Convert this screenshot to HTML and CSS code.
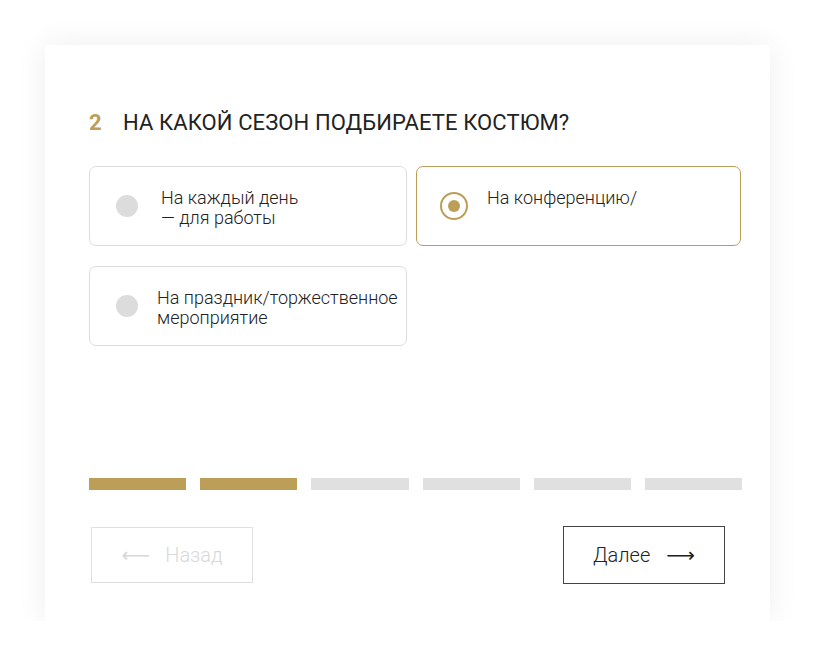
FILE: index.html
```html
<!DOCTYPE html>
<html lang="ru">
<head>
<meta charset="utf-8">
<link rel="stylesheet" href="styles.css">
</head>
<body>
<div class="card">
  <h2 class="question"><span class="num">2</span><span class="qtext">НА КАКОЙ СЕЗОН ПОДБИРАЕТЕ КОСТЮМ?</span></h2>
  <div class="options">
    <div class="option">
      <span class="radio"></span>
      <span class="label">На каждый день<br>— для работы</span>
    </div>
    <div class="option option-selected">
      <span class="radio radio-on"><span class="dot"></span></span>
      <span class="label">На конференцию/</span>
    </div>
    <div class="option option-narrow">
      <span class="radio"></span>
      <span class="label">На праздник/торжественное<br>мероприятие</span>
    </div>
  </div>
  <div class="progress">
    <span class="seg seg-done"></span>
    <span class="seg seg-done"></span>
    <span class="seg"></span>
    <span class="seg"></span>
    <span class="seg"></span>
    <span class="seg"></span>
  </div>
  <div class="nav">
    <button class="btn btn-back"><span class="arrow">⟵</span>Назад</button>
    <button class="btn btn-next">Далее<span class="arrow">⟶</span></button>
  </div>
</div>
</body>
</html>
```
FILE: styles.css
```css
html, body {
  margin: 0;
  padding: 0;
  background: #fff;
}
body {
  font-family: Roboto, "Noto Sans", sans-serif;
  color: #222;
}
.card {
  margin: 45px 0 0 45px;
  width: 725px;
  height: 576px;
  box-sizing: border-box;
  padding: 65px 28px 0 44px;
  background: #fff;
  box-shadow: 0 0 30px rgba(0, 0, 0, 0.07);
}
.question {
  margin: 0;
  font-size: 22px;
  line-height: 25px;
  font-weight: 400;
  letter-spacing: 0.1px;
  display: flex;
  color: #222;
}
.num {
  color: #bc9e58;
  font-weight: 700;
  width: 34px;
}
.options {
  margin-top: 31px;
  display: grid;
  grid-template-columns: 318px 325px;
  column-gap: 9px;
  row-gap: 20px;
}
.option {
  height: 80px;
  box-sizing: border-box;
  border: 1px solid #dcdcdc;
  border-radius: 7px;
  display: flex;
  align-items: flex-start;
  padding: 0 0 0 26px;
}
.option-selected {
  border-color: #bc9e58;
  padding-left: 23px;
}
.radio {
  flex: none;
  width: 22px;
  height: 22px;
  border-radius: 50%;
  background: #dcdcdc;
  align-self: center;
  margin-right: 23px;
}
.option-narrow .radio {
  margin-right: 19px;
}
.radio-on {
  width: 28px;
  height: 28px;
  box-sizing: border-box;
  background: #fff;
  border: 2px solid #bc9e58;
  display: flex;
  align-items: center;
  justify-content: center;
  margin-right: 19px;
}
.dot {
  width: 12px;
  height: 12px;
  border-radius: 50%;
  background: #bc9e58;
}
.label {
  font-size: 18px;
  font-weight: 300;
  line-height: 20px;
  color: #222;
  padding-top: 21px;
}
.progress {
  margin-top: 132px;
  display: flex;
  gap: 14px;
  width: 653px;
}
.seg {
  flex: 1;
  height: 12px;
  background: #e0e0e0;
}
.seg-done {
  background: #bc9e58;
}
.nav {
  margin-top: 36px;
  display: flex;
  justify-content: space-between;
  align-items: center;
  width: 634px;
  padding-left: 2px;
}
.btn {
  font-family: Roboto, "Noto Sans", sans-serif;
  font-weight: 300;
  font-size: 20px;
  background: #fff;
  height: 56px;
  width: 162px;
  display: flex;
  align-items: center;
  justify-content: center;
  padding: 0;
  cursor: pointer;
}
.btn-back {
  border: 1px solid #e0e0e0;
  color: #d8d8d8;
}
.btn-back .arrow {
  margin-right: 15px;
}
.btn-next {
  border: 1px solid #444;
  color: #222;
  height: 58px;
}
.btn-next .arrow {
  margin-left: 16px;
}
.arrow {
  font-size: 20px;
  font-family: "DejaVu Sans", sans-serif;
  font-weight: 400;
}
```
